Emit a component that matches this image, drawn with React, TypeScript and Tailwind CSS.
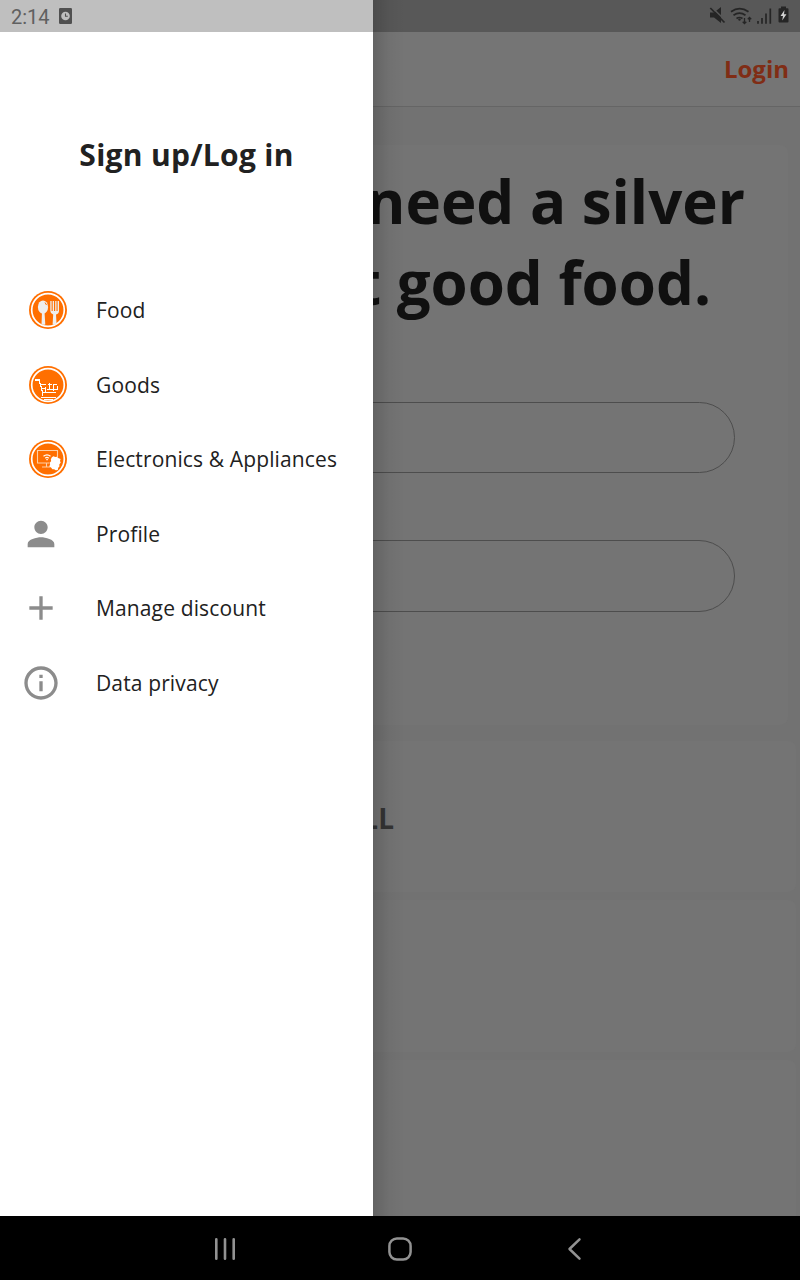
import type { ReactNode } from "react";

function Badge({ children }: { children: ReactNode }) {
  return (
    <svg viewBox="0 0 38 38" className="ml-[8px] h-[38px] w-[38px]">
      <circle cx="19" cy="19" r="19" fill="#ff6f00" />
      <circle cx="19" cy="19" r="16.3" fill="none" stroke="#fff" strokeWidth="1.7" />
      {children}
    </svg>
  );
}

function FoodIcon() {
  return (
    <Badge>
      <ellipse cx="14" cy="16" rx="5.1" ry="6.6" fill="#eee" />
      <path d="M13 21h2.5l.8 12.500q-1.900.6-3.800 0z" fill="#eee" />
      <path d="M16 11.500l1.500 2.500" stroke="#ff6f00" strokeWidth="1" />
      <path d="M21.300 10h1.300v10h1.100V10h1.300v10h1.200V10h1.300v10h1.100V10H30v10q0 2.500-3 3.500l.6 10q-2 .6-4 0l.6-10q-2.900-1-2.900-3.500z" fill="#eee" />
    </Badge>
  );
}

function GoodsIcon() {
  return (
    <Badge>
      <g shapeRendering="crispEdges" fill="none" stroke="#fff">
        <path d="M6 14h4l3.700 12.500H27" strokeWidth="1.3" />
        <path d="M11 18.500h6M19 18.500h4M25 18.500h3M13 22.500h3M18 23.500h10M20.500 17v7M24.500 18v7M28.500 20v4M16.500 21v5" strokeWidth="1" />
        <path d="M12 31.500h15" strokeWidth="1.600" />
        <path d="M15 33.500h9" strokeWidth="1" />
        <path d="M14 26.500l-1 3.500" strokeWidth="1" />
      </g>
    </Badge>
  );
}

function ElectronicsIcon() {
  return (
    <Badge>
      <path d="M28.500 17.500v-7h-20V23H20.500M17.500 23.500v3M13 27h8" fill="none" stroke="#ffd0a6" strokeWidth="1.1" />
      <path d="M14.500 16.300q3.500-3 7 0M16.300 18.200q1.700-1.500 3.400 0" fill="none" stroke="#fff" strokeWidth="1.2" />
      <path d="M17.300 19h1.500v1.300h-1.500z" fill="#fff" />
      <path d="M22.700 17.500l1.600-1.300 2 .8 1.500-.2 1.400 1.300 2.400.8-.6 2 .7 1.500-1.400 2 .1 2-1.200 1.300-.4 2.300-2 .2-1.700-1-1.700.1-1.200-1.500-1.900-1.300.8-2.300-.3-1.500 1.400-1.600-.4-1.700z" fill="#fff" />
    </Badge>
  );
}

function Glyph({ d }: { d: string }) {
  return (
    <svg viewBox="0 0 24 24" className="ml-[0.3px] h-10 w-10" fill="#8c8c8c">
      <path d={d} />
    </svg>
  );
}

const items: { label: string; icon: ReactNode }[] = [
  { label: "Food", icon: <FoodIcon /> },
  { label: "Goods", icon: <GoodsIcon /> },
  { label: "Electronics & Appliances", icon: <ElectronicsIcon /> },
  {
    label: "Profile",
    icon: <Glyph d="M12 12c2.21 0 4-1.79 4-4s-1.79-4-4-4-4 1.79-4 4 1.79 4 4 4zm0 2c-2.67 0-8 1.34-8 4v2h16v-2c0-2.66-5.33-4-8-4z" />,
  },
  { label: "Manage discount", icon: <Glyph d="M19 13h-6v6h-2v-6H5v-2h6V5h2v6h6z" /> },
  {
    label: "Data privacy",
    icon: <Glyph d="M11 7h2v2h-2zm0 4h2v6h-2zm1-9C6.48 2 2 6.48 2 12s4.48 10 10 10 10-4.48 10-10S17.52 2 12 2zm0 18c-4.41 0-8-3.59-8-8s3.59-8 8-8 8 3.59 8 8-3.59 8-8 8z" />,
  },
];

function Drawer() {
  return (
    <div className="absolute inset-y-0 left-0 flex">
      <aside className="w-[373px] bg-white">
        <div className="flex h-8 items-center bg-[#bfbfbf] pl-[11px]">
          <span className="mt-[2px] font-[Roboto] text-[20px] leading-none text-[#606060]">2:14</span>
          <svg viewBox="0 0 13 16" className="ml-[9px] h-4 w-[13px]">
            <rect width="13" height="16" rx="1.2" fill="#505050" />
            <circle cx="6.5" cy="8" r="4.3" fill="#bfbfbf" />
            <path d="M6.5 5.4V8.3h2.3" fill="none" stroke="#505050" strokeWidth="1.1" />
          </svg>
        </div>
        <h1 className="mt-[101px] text-center text-[30px] leading-[44px] font-bold tracking-[0.28px] text-[#212121]">Sign up/Log in</h1>
        <nav className="mt-[96px]">
          {items.map((item) => (
            <div key={item.label} className="flex h-[74.5px] items-center pl-[21px]">
              <div className="w-[75px]">{item.icon}</div>
              <span className="text-[21px] leading-7 tracking-[0.13px] whitespace-nowrap text-[#212121]">{item.label}</span>
            </div>
          ))}
        </nav>
      </aside>
      <div className="w-8 bg-linear-to-r from-black/15 via-black/4 to-transparent" />
    </div>
  );
}

function StatusIcons() {
  return (
    <svg viewBox="0 0 90 24" className="h-6 w-[90px]" fill="#252525" stroke="#252525">
      <path d="M10 8.500h4l7-5.500v16l-7-5.500h-4z" stroke="none" />
      <path d="M11.500 3L26.500 17.500" stroke="#585858" strokeWidth="1.6" />
      <path d="M10.300 4L24.500 18.500" strokeWidth="1.7" />
      <path d="M31 7.800q8.500-6.500 17.500 0M33.500 11.300q6-4.300 12 0M36.500 14.500q3-2 6 0" fill="none" strokeWidth="1.7" />
      <circle cx="39.5" cy="15.600" r="1.2" stroke="none" />
      <path d="M44.500 14v5.500M42.700 17.700l1.800 1.800 1.800-1.800M49.500 18v-4.500M47.800 15.300l1.700-1.800 1.700 1.800" fill="none" strokeWidth="1.3" />
      <path d="M58 17v2.700M62 14v5.700M66 9.500v10.200M70.300 4.500v15.200" fill="none" strokeWidth="1.7" />
      <path d="M81 2.500h5v1.700h1.500q1 0 1 1V17.500q0 1-1 1h-8q-1 0-1-1V5.200q0-1 1-1H81z" stroke="none" />
      <path d="M84.500 6l-4 6H83l-.8 4.500 4.300-6.300H84z" fill="#d0d0d0" stroke="none" />
    </svg>
  );
}

function Page() {
  return (
    <main className="flex h-full flex-col bg-[#727272]">
      <div className="flex h-8 shrink-0 items-center justify-end bg-[#585858] pr-[10px] pb-px">
        <StatusIcons />
      </div>
      <header className="flex h-[75px] shrink-0 items-center justify-end border-b border-[#656565] bg-[#757575] pr-[11px]">
        <span className="text-[24px] font-bold text-[#802d15]">Login</span>
      </header>
      <section className="mt-[38px] mr-3 h-[580px] shrink-0 rounded-r-lg bg-[#747474] pt-4">
        <div className="text-right text-[60px] leading-[81px] font-bold text-[#101010]">
          <p className="pr-[43px]">need a silver</p>
          <p className="pr-[77px]">t good food.</p>
        </div>
        <div className="mt-[78.6px] mr-[53px] h-[71.5px] rounded-full border-[1.4px] border-[#4d4d4d]" />
        <div className="mt-[67px] mr-[53px] h-[71.5px] rounded-full border-[1.4px] border-[#4d4d4d]" />
      </section>
      <section className="mt-4 mr-1 flex h-[151px] shrink-0 items-center rounded-r-lg bg-[#747474] pt-[3px]">
        <p className="w-[394px] text-right text-[28px] font-bold text-[#343434]">LL</p>
      </section>
      <section className="mt-2 mr-1 h-[152px] shrink-0 rounded-r-lg bg-[#747474]" />
      <section className="mt-2 mr-1 grow rounded-tr-lg bg-[#747474]" />
    </main>
  );
}

function NavBar() {
  return (
    <footer className="flex h-16 items-center justify-center gap-[151px] bg-black pt-[2px]">
      <svg viewBox="0 0 24 24" className="h-6 w-6" stroke="#929292" strokeWidth="2.6" strokeLinecap="round">
        <path d="M3.3 2.3v19.4M12 2.3v19.4M20.700 2.3v19.4" />
      </svg>
      <svg viewBox="0 0 24 24" className="h-6 w-6" fill="none" stroke="#929292" strokeWidth="2.5">
        <rect x="1.4" y="1.4" width="21.2" height="21.2" rx="7.5" />
      </svg>
      <svg viewBox="0 0 24 24" className="h-6 w-6" fill="none" stroke="#929292" strokeWidth="2.5" strokeLinecap="round" strokeLinejoin="round">
        <path d="M16.500 2.300L6.500 12l10 9.700" />
      </svg>
    </footer>
  );
}

export default function App() {
  return (
    <div className="flex h-[1280px] w-[800px] flex-col overflow-hidden font-['Open_Sans',sans-serif]">
      <div className="relative h-[1216px]">
        <Page />
        <Drawer />
      </div>
      <NavBar />
    </div>
  );
}
